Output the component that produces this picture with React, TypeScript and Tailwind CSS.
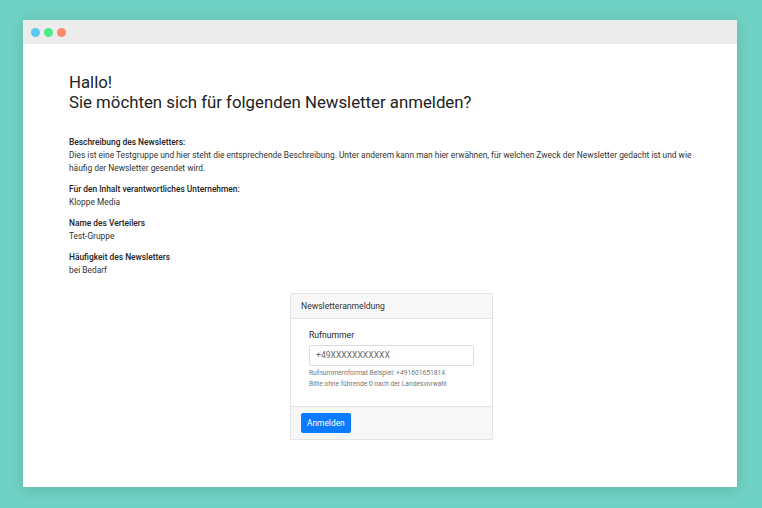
export default function App() {
  return (
    <div
      className="w-[762px] h-[508px] bg-[#6fd1c3] pt-[20px] pl-[23px]"
      style={{ fontFamily: "Roboto, 'Liberation Sans', sans-serif" }}
    >
      <div className="w-[714px] h-[467px] bg-white shadow-[0_2px_12px_rgba(0,0,0,0.12)] flex flex-col">
        {/* window bar */}
        <div className="h-[24px] bg-[#ececec] flex items-center gap-[4px] pl-[8px]">
          <span className="w-[9px] h-[9px] rounded-full bg-[#5cc8ef]" />
          <span className="w-[9px] h-[9px] rounded-full bg-[#4fe98b]" />
          <span className="w-[9px] h-[9px] rounded-full bg-[#fc8a6a]" />
        </div>

        <div className="pl-[46px] pr-[40px] pt-[28px] text-[#222]">
          <h1 className="text-[16.8px] leading-[20px] font-normal">
            Hallo!
            <br />
            Sie möchten sich für folgenden Newsletter anmelden?
          </h1>

          <div className="mt-[24px] text-[8.4px] leading-[13px] text-[#333] flex flex-col gap-[8px]">
            <div>
              <div className="font-medium text-[#222]">Beschreibung des Newsletters:</div>
              <div>
                Dies ist eine Testgruppe und hier steht die entsprechende Beschreibung. Unter anderem kann man hier erwähnen, für welchen Zweck der Newsletter gedacht ist und wie häufig der Newsletter gesendet wird.
              </div>
            </div>
            <div>
              <div className="font-medium text-[#222]">Für den Inhalt verantwortliches Unternehmen:</div>
              <div>Kloppe Media</div>
            </div>
            <div>
              <div className="font-medium text-[#222]">Name des Verteilers</div>
              <div>Test-Gruppe</div>
            </div>
            <div>
              <div className="font-medium text-[#222]">Häufigkeit des Newsletters</div>
              <div>bei Bedarf</div>
            </div>
          </div>

          {/* card */}
          <div className="mt-[16px] ml-[221px] w-[203px] border border-[#e4e4e4] rounded-[2px] flex flex-col">
            <div className="h-[25px] bg-[#f7f7f7] border-b border-[#e4e4e4] flex items-center px-[10px] text-[8.6px] text-[#333]">
              Newsletteranmeldung
            </div>
            <div className="px-[18px] pt-[10px] pb-[16px]">
              <div className="text-[8.6px] text-[#222]">Rufnummer</div>
              <div className="mt-[3px] h-[21px] w-[165px] border border-[#dcdcdc] rounded-[2px] flex items-center px-[6px] text-[8.6px] text-[#666]">
                +49XXXXXXXXXXX
              </div>
              <div className="mt-[2px] text-[6.7px] leading-[11px] text-[#777]">
                <div>Rufnummernformat Beispiel: +491601651814</div>
                <div>Bitte ohne führende 0 nach der Landesvorwahl</div>
              </div>
            </div>
            <div className="h-[33px] bg-[#f7f7f7] border-t border-[#e4e4e4] flex items-center px-[10px]">
              <button className="h-[20px] px-[6px] bg-[#0a7bff] rounded-[2px] text-white text-[8.4px]">
                Anmelden
              </button>
            </div>
          </div>
        </div>
      </div>
    </div>
  );
}
